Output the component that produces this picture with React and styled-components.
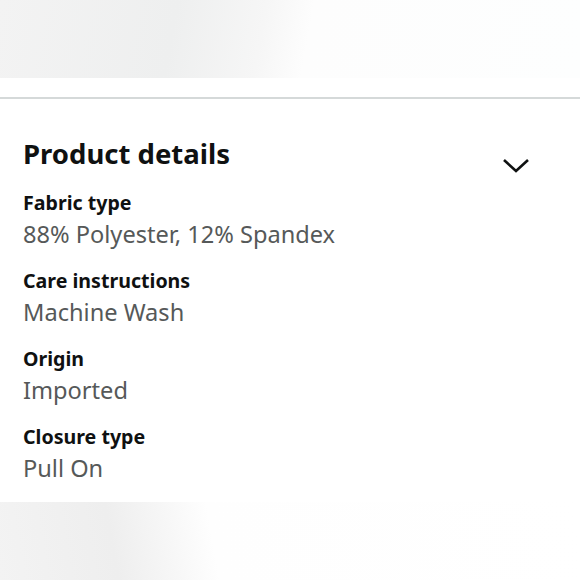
import React from 'react';
import styled, { createGlobalStyle } from 'styled-components';

const GlobalStyle = createGlobalStyle`
  html, body {
    margin: 0;
    padding: 0;
    background: #ffffff;
  }
  body {
    font-family: 'Noto Sans', 'Open Sans', Arial, sans-serif;
    color: #0f1111;
  }
`;

const Page = styled.div`
  width: 580px;
  height: 580px;
  overflow: hidden;
  display: flex;
  flex-direction: column;
  background: #fff;
`;

const TopBand = styled.div`
  height: 78px;
  flex-shrink: 0;
  background: linear-gradient(
    100deg,
    #f3f3f3 0%,
    #eeefef 30%,
    #f6f6f6 45%,
    #fdfdfd 53%,
    #fdfefe 100%
  );
`;

const Divider = styled.div`
  margin-top: 19px;
  height: 2px;
  background: #d5d9d9;
  flex-shrink: 0;
`;

const Section = styled.section`
  padding: 37px 0 0 23px;
  flex: 1;
`;

const Header = styled.div`
  display: flex;
  align-items: flex-start;
  justify-content: space-between;
  padding-right: 50px;
`;

const Title = styled.h2`
  margin: 0;
  font-size: 27.5px;
  line-height: 36px;
  font-weight: 700;
  color: #0f1111;
`;

const Chevron = styled.svg`
  width: 28px;
  height: 18px;
  margin-top: 21px;
`;

const Row = styled.div`
  margin-top: ${(p) => (p.first ? '13px' : '16px')};
`;

const Label = styled.div`
  font-size: 19.6px;
  line-height: 30px;
  font-weight: 700;
  color: #0f1111;
`;

const Value = styled.div`
  font-size: 23.6px;
  line-height: 32px;
  color: #565959;
`;

const BottomBand = styled.div`
  height: 78px;
  flex-shrink: 0;
  background: linear-gradient(
    80deg,
    #f3f3f3 0%,
    #eeeeee 20%,
    #f7f7f7 30%,
    #fefefe 37%,
    #ffffff 100%
  );
`;

const details = [
  { label: 'Fabric type', value: '88% Polyester, 12% Spandex' },
  { label: 'Care instructions', value: 'Machine Wash' },
  { label: 'Origin', value: 'Imported' },
  { label: 'Closure type', value: 'Pull On' },
];

export default function App() {
  return (
    <Page>
      <GlobalStyle />
      <TopBand />
      <Divider />
      <Section>
        <Header>
          <Title>Product details</Title>
          <Chevron viewBox="0 0 28 18" fill="none">
            <path d="M2 3 L14 14 L26 3" stroke="#0f1111" strokeWidth="2.6" />
          </Chevron>
        </Header>
        {details.map((d, i) => (
          <Row key={d.label} first={i === 0}>
            <Label>{d.label}</Label>
            <Value>{d.value}</Value>
          </Row>
        ))}
      </Section>
      <BottomBand />
    </Page>
  );
}
